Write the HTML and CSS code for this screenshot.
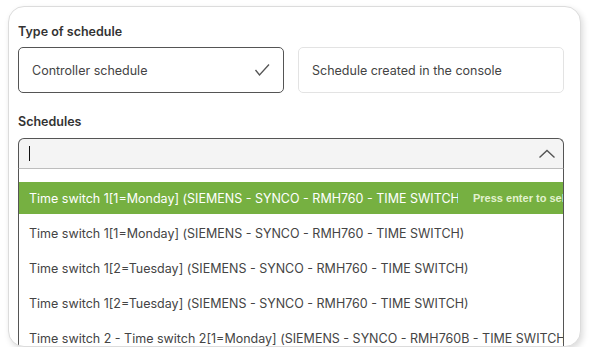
FILE: index.html
```html
<!DOCTYPE html>
<html>
<head>
<meta charset="utf-8">
<link rel="stylesheet" href="styles.css">
</head>
<body>
<div class="card">
  <div class="label label-type">Type of schedule</div>
  <div class="options">
    <div class="option selected">
      <span>Controller schedule</span>
      <svg class="check" width="16" height="14" viewBox="0 0 16 14"><path d="M1.5 7 L5.5 12 L15 1.5" fill="none" stroke="#555" stroke-width="1.3"/></svg>
    </div>
    <div class="option">
      <span>Schedule created in the console</span>
    </div>
  </div>
  <div class="label label-sched">Schedules</div>
  <div class="select">
    <span class="caret"></span>
    <svg class="chevron" width="18" height="10" viewBox="0 0 18 10"><path d="M1.5 8.5 L9 1.5 L16.5 8.5" fill="none" stroke="#555" stroke-width="1.4"/></svg>
  </div>
  <div class="list">
    <div class="row active"><span class="text">Time switch 1[1=Monday] (SIEMENS - SYNCO - RMH760 - TIME SWITCH)</span><span class="hint">Press enter to select</span></div>
    <div class="row"><span class="text">Time switch 1[1=Monday] (SIEMENS - SYNCO - RMH760 - TIME SWITCH)</span></div>
    <div class="row"><span class="text">Time switch 1[2=Tuesday] (SIEMENS - SYNCO - RMH760 - TIME SWITCH)</span></div>
    <div class="row"><span class="text">Time switch 1[2=Tuesday] (SIEMENS - SYNCO - RMH760 - TIME SWITCH)</span></div>
    <div class="row"><span class="text">Time switch 2 - Time switch 2[1=Monday] (SIEMENS - SYNCO - RMH760B - TIME SWITCH)</span></div>
    <div class="row"><span class="text">Time switch 2 - Time switch 2[2=Tuesday] (SIEMENS - SYNCO - RMH760B - TIME SWITCH)</span></div>
  </div>
</div>
</body>
</html>
```

FILE: styles.css
```css
html, body {
  margin: 0;
  padding: 0;
  background: #fff;
}
body {
  font-family: Inter, "Noto Sans", sans-serif;
  color: #444;
}
.card {
  box-sizing: border-box;
  margin: 6px 0 0 8px;
  width: 573px;
  height: 341px;
  border: 1px solid #dcdcdc;
  border-radius: 16px;
  background: #fff;
  box-shadow: 2px 3px 6px rgba(0, 0, 0, 0.14);
  padding: 17px 16px 0 9px;
  overflow: hidden;
}
.label {
  font-size: 12.5px;
  font-weight: 600;
  color: #333;
  line-height: 16px;
}
.options {
  display: flex;
  gap: 14px;
  margin-top: 7px;
}
.option {
  box-sizing: border-box;
  flex: 0 0 266px;
  height: 46px;
  border: 1px solid #e3e3e3;
  border-radius: 5px;
  display: flex;
  align-items: center;
  justify-content: space-between;
  padding: 0 13px 0 13px;
  font-size: 12.5px;
  color: #444;
}
.option.selected {
  border-color: #555;
}
.label-sched {
  margin-top: 21px;
}
.select {
  box-sizing: border-box;
  margin-top: 8px;
  width: 546px;
  height: 31px;
  background: #f4f4f4;
  border: 1px solid #555;
  border-bottom: 1px solid #bdbdbd;
  border-radius: 6px 6px 0 0;
  display: flex;
  align-items: center;
  justify-content: space-between;
  padding: 0 7px 0 10px;
}
.caret {
  display: block;
  width: 1px;
  height: 15px;
  background: #111;
}
.list {
  box-sizing: border-box;
  width: 546px;
  border-left: 1px solid #555;
  border-right: 1px solid #555;
  padding-top: 13px;
  overflow: hidden;
  display: flex;
  flex-direction: column;
  gap: 3px;
}
.row {
  height: 32px;
  flex: 0 0 32px;
  display: flex;
  align-items: center;
  padding-left: 10px;
  font-size: 12.5px;
  color: #444;
  white-space: nowrap;
}
.row.active {
  background: #76b041;
  color: #fff;
}
.row .text {
  flex: 0 0 auto;
}
.row.active .text {
  flex: 0 0 429px;
  overflow: hidden;
}
.hint {
  flex: 0 0 auto;
  margin-left: 15px;
  font-family: "Liberation Sans", Arial, sans-serif;
  font-weight: bold;
  font-size: 11px;
  color: #e2f2cf;
}
```
